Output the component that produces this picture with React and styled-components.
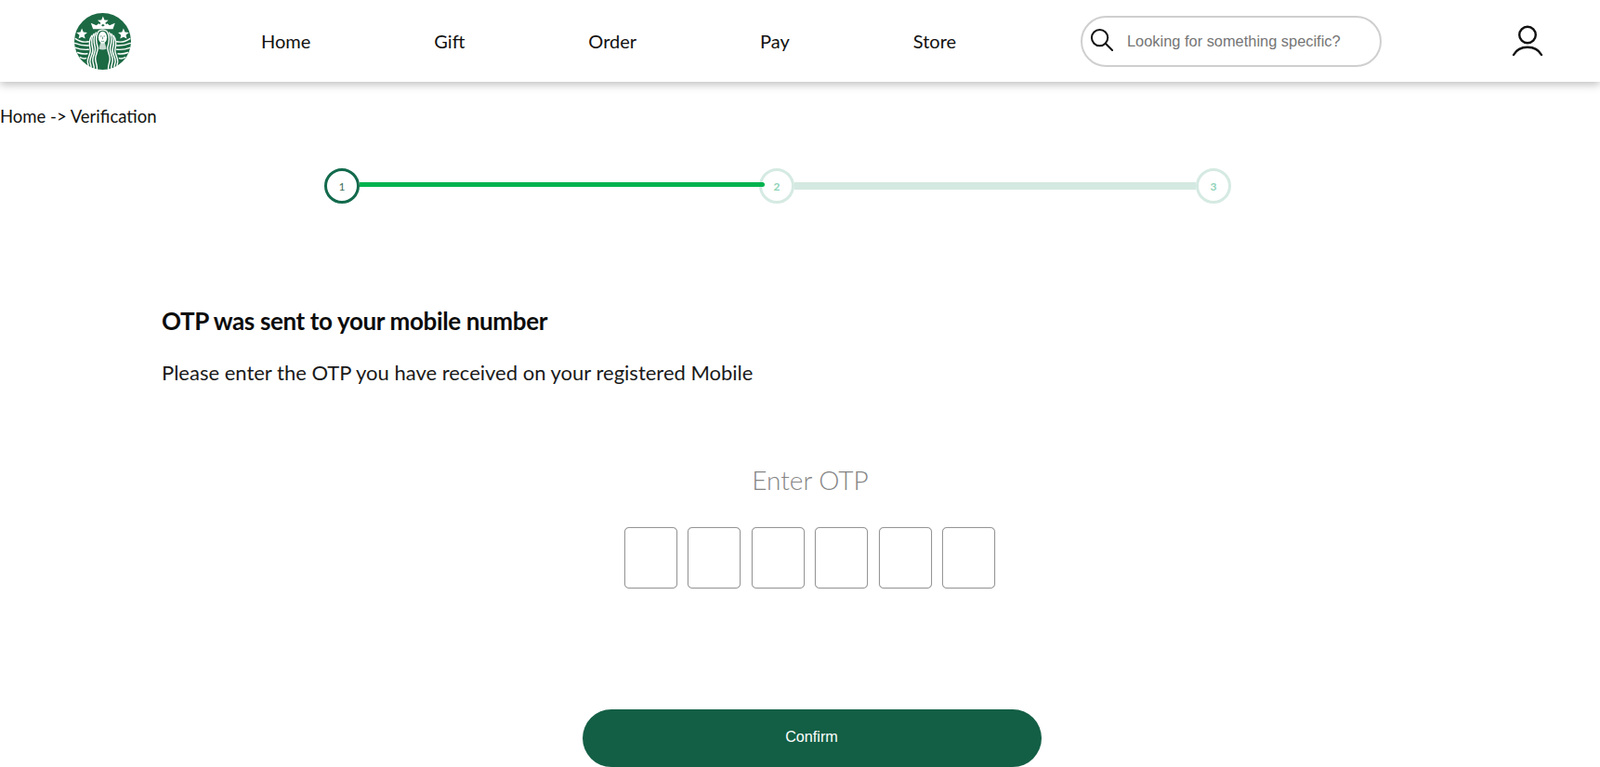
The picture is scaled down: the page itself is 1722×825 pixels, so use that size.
import React from "react";
import styled, { createGlobalStyle } from "styled-components";

const GlobalStyle = createGlobalStyle`
  html, body {
    margin: 0;
    padding: 0;
    background: #fff;
    overflow: hidden;
  }
  * { box-sizing: border-box; }
  body {
    font-family: 'Lato', sans-serif;
    color: #111;
  }
`;

const Page = styled.div`
  width: 1722px;
  height: 825px;
  overflow: hidden;
`;

const Header = styled.header`
  display: flex;
  align-items: center;
  height: 88px;
  padding: 0 61px 0 80px;
  background: #fff;
  box-shadow: 0 3px 9px rgba(0, 0, 0, 0.25);
`;

const Logo = styled.svg`
  width: 61px;
  height: 61px;
  flex: none;
`;

const Nav = styled.nav`
  display: flex;
  gap: 133px;
  margin-left: 140px;
`;

const NavLink = styled.a`
  font-size: 20px;
  color: #111;
  cursor: pointer;
`;

const SearchBox = styled.div`
  display: flex;
  align-items: center;
  width: 324px;
  height: 55px;
  margin-left: auto;
  padding: 0 24px 0 8px;
  gap: 15px;
  border: 2px solid #cfcfcf;
  border-radius: 28px;

  svg { flex: none; margin-top: -4px; }
`;

const SearchInput = styled.input`
  flex: 1;
  min-width: 0;
  border: 0;
  outline: 0;
  padding: 0;
  margin-top: 1px;
  background: transparent;
  font-family: 'Liberation Sans', sans-serif;
  font-size: 16.4px;

  &::placeholder { color: #757575; opacity: 1; }
`;

const UserButton = styled.button`
  display: flex;
  margin-left: 140px;
  padding: 0;
  border: 0;
  background: none;
`;

const Crumbs = styled.div`
  margin-top: 25px;
  font-size: 18.5px;
  line-height: 24px;
`;

const Stepper = styled.div`
  display: flex;
  align-items: center;
  width: 976px;
  margin: 44px 0 0 349px;
`;

const StepDot = styled.div`
  position: relative;
  z-index: ${(p) => (p.$active ? 2 : 0)};
  flex: none;
  display: flex;
  align-items: center;
  justify-content: center;
  width: 38px;
  height: 38px;
  border-radius: 50%;
  background: #fff;
  border: 3px solid ${(p) => (p.$active ? "#136a4d" : "#d5eae2")};
  color: ${(p) => (p.$active ? "#3f6e5e" : "#8fd3b8")};
  font-size: 12px;
  font-weight: ${(p) => (p.$active ? 400 : 700)};
`;

const DoneLine = styled.div`
  position: relative;
  z-index: 1;
  flex: none;
  width: 436px;
  height: 5px;
  margin: -3px -6px 0 0;
  border-radius: 0 3px 3px 0;
  background: #00b34f;
`;

const TodoLine = styled.div`
  flex: 1;
  height: 8px;
  background: #d4e9e1;
`;

const Content = styled.main`
  padding-left: 174px;
`;

const Title = styled.h1`
  margin: 110px 0 0;
  font-size: 26px;
  line-height: 32px;
  font-weight: 700;
  letter-spacing: -0.36px;
  color: #0c0c0c;
`;

const Lead = styled.p`
  margin: 24px 0 0;
  font-size: 22px;
  line-height: 32px;
  color: #1a1a1a;
`;

const OtpSection = styled.section`
  display: flex;
  flex-direction: column;
  width: 1396px;
  align-items: center;
  margin-top: 81px;
`;

const OtpLabel = styled.div`
  font-size: 28px;
  line-height: 36px;
  font-weight: 300;
  color: #858585;
`;

const OtpRow = styled.div`
  display: flex;
  gap: 11.5px;
  margin: 33px 0 0 -1px;
`;

const OtpBox = styled.input`
  width: 57px;
  height: 66px;
  border: 1px solid #969696;
  border-radius: 5px;
  box-shadow: 0 0 1px rgba(0, 0, 0, 0.35);
  outline: 0;
  padding: 0;
  text-align: center;
  font-size: 22px;
`;

const ConfirmButton = styled.button`
  width: 494px;
  height: 62px;
  margin: 130px 0 0 3px;
  padding: 0 0 3px;
  border: 0;
  border-radius: 31px;
  background: #135f45;
  color: #fff;
  font-family: 'Liberation Sans', sans-serif;
  font-size: 16.2px;
  cursor: pointer;
`;

const navItems = ["Home", "Gift", "Order", "Pay", "Store"];

// one half of the siren, mirrored for the other side
function HairStrands() {
  return (
    <g fill="none" stroke="#fff" strokeWidth="4.4" strokeLinecap="round">
      <path d="M106 90 C96 105 100 125 104 138 C108 152 96 165 97 180 C98 195 104 200 102 214" />
      <path d="M99 92 C88 108 92 128 96 142 C100 156 87 168 88 184 C89 198 95 204 92 212" />
      <path d="M92 96 C80 112 84 130 88 146 C92 160 78 172 79 188 C80 198 85 204 82 208" />
      <path d="M85 102 C74 116 76 132 80 150 C82 162 70 174 71 190 C72 196 75 200 73 203" />
      <path d="M31 112 Q50 126 74 122" />
      <path d="M29 127 Q50 136 74 135" />
      <path d="M31 142 Q50 150 74 148" />
      <path d="M37 158 Q54 164 70 162" />
      <path d="M46 174 Q58 180 66 177" />
      <polygon points="52,78 57,90 70,92 60,100 63,112 52,106 41,112 44,100 34,92 47,90" fill="#fff" stroke="none" />
    </g>
  );
}

function SirenLogo() {
  return (
    <Logo viewBox="27 27 188 188" aria-label="Starbucks">
      <circle cx="121" cy="121" r="94" fill="#1c6a44" />
      <polygon points="122,38 127,50 140,51 130,59 134,71 122,64 110,71 114,59 104,51 117,50" fill="#fff" />
      <polygon points="82,60 100,68 108,62 122,72 136,62 144,68 162,60 155,80 89,80" fill="#fff" />
      <HairStrands />
      <g transform="translate(242 0) scale(-1 1)">
        <HairStrands />
      </g>
      <path d="M106 88 Q121 78 136 88" stroke="#fff" strokeWidth="4" fill="none" />
      <ellipse cx="121" cy="108" rx="14" ry="20" fill="#fff" />
      <path d="M113 104 h5 M124 104 h5 M121 106 v8 M116 120 q5 3 10 0" stroke="#1c6a44" strokeWidth="2" fill="none" />
      <path d="M114 126 L128 126 L134 146 Q121 152 108 146 Z" fill="#fff" opacity="0.75" />
    </Logo>
  );
}

function SearchIcon() {
  return (
    <svg width="25" height="25" viewBox="0 0 26 26" fill="none" stroke="#111" strokeWidth="2.1">
      <circle cx="11" cy="11" r="9" />
      <path d="M17.5 17.5 L25 25" strokeLinecap="round" />
    </svg>
  );
}

function UserIcon() {
  return (
    <svg width="34" height="34" viewBox="0 0 34 34" fill="none" stroke="#111" strokeWidth="2.4">
      <circle cx="17" cy="10.5" r="8.8" />
      <path d="M2 32 C8 21 26 21 32 32" strokeLinecap="round" />
    </svg>
  );
}

export default function App() {
  return (
    <Page>
      <GlobalStyle />
      <Header>
        <SirenLogo />
        <Nav>
          {navItems.map((item) => (
            <NavLink key={item}>{item}</NavLink>
          ))}
        </Nav>
        <SearchBox>
          <SearchIcon />
          <SearchInput placeholder="Looking for something specific?" />
        </SearchBox>
        <UserButton aria-label="Account">
          <UserIcon />
        </UserButton>
      </Header>
      <Crumbs>Home -&gt; Verification</Crumbs>
      <Stepper>
        <StepDot $active>1</StepDot>
        <DoneLine />
        <StepDot>2</StepDot>
        <TodoLine />
        <StepDot>3</StepDot>
      </Stepper>
      <Content>
        <Title>OTP was sent to your mobile number</Title>
        <Lead>Please enter the OTP you have received on your registered Mobile</Lead>
        <OtpSection>
          <OtpLabel>Enter OTP</OtpLabel>
          <OtpRow>
            {[0, 1, 2, 3, 4, 5].map((i) => (
              <OtpBox key={i} maxLength={1} />
            ))}
          </OtpRow>
          <ConfirmButton>Confirm</ConfirmButton>
        </OtpSection>
      </Content>
    </Page>
  );
}
